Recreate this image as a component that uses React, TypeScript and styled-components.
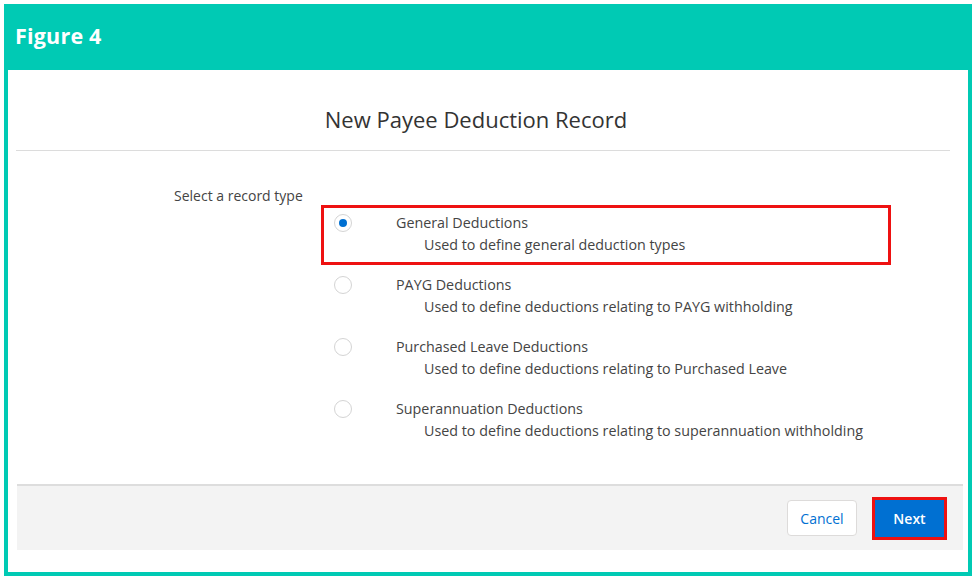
import styled, { createGlobalStyle } from "styled-components";

type Option = {
  id: string;
  title: string;
  description: string;
};

const options: Option[] = [
  {
    id: "general",
    title: "General Deductions",
    description: "Used to define general deduction types",
  },
  {
    id: "payg",
    title: "PAYG Deductions",
    description: "Used to define deductions relating to PAYG withholding",
  },
  {
    id: "leave",
    title: "Purchased Leave Deductions",
    description: "Used to define deductions relating to Purchased Leave",
  },
  {
    id: "super",
    title: "Superannuation Deductions",
    description: "Used to define deductions relating to superannuation withholding",
  },
];

function App() {
  const selected = "general";

  return (
    <>
      <GlobalStyle />
      <ScFrame>
        <ScHeader>Figure 4</ScHeader>
        <ScBody>
          <ScTitle>New Payee Deduction Record</ScTitle>
          <ScDivider />
          <ScContent>
            <ScFieldLabel>Select a record type</ScFieldLabel>
            <ScOptions>
              {options.map((item) => {
                const isChecked = item.id === selected;
                return (
                  <ScOptionRow key={item.id} $highlight={isChecked}>
                    <ScRadio $checked={isChecked} />
                    <ScOptionText>
                      <ScOptionTitle>{item.title}</ScOptionTitle>
                      <ScOptionDesc>{item.description}</ScOptionDesc>
                    </ScOptionText>
                  </ScOptionRow>
                );
              })}
            </ScOptions>
          </ScContent>
          <ScFooter>
            <ScCancelBtn>Cancel</ScCancelBtn>
            <ScNextOutline>
              <ScNextBtn>Next</ScNextBtn>
            </ScNextOutline>
          </ScFooter>
        </ScBody>
      </ScFrame>
    </>
  );
}

const GlobalStyle = createGlobalStyle`
  body {
    margin: 0;
    background: #ffffff;
    font-family: "Open Sans", "Noto Sans", sans-serif;
  }
`;

const ScFrame = styled.div`
  margin: 4px;
  width: 968px;
  height: 572px;
  box-sizing: border-box;
  background-color: #00cab4;
  padding: 0 4px 4px;
  display: flex;
  flex-direction: column;
`;

const ScHeader = styled.div`
  height: 66px;
  box-sizing: border-box;
  display: flex;
  align-items: center;
  padding-left: 7px;
  padding-bottom: 4px;
  color: #ffffff;
  font-family: "Open Sans", sans-serif;
  font-weight: 700;
  font-size: 21.5px;
  letter-spacing: 0.2px;
`;

const ScBody = styled.div`
  flex: 1;
  background-color: #ffffff;
  display: flex;
  flex-direction: column;
`;

const ScTitle = styled.h2`
  margin: 0;
  padding: 34px 24px 0 0;
  margin-bottom: 16px;
  line-height: 30px;
  font-size: 22px;
  font-weight: 400;
  color: #333333;
  text-align: center;
`;

const ScDivider = styled.div`
  height: 1px;
  background-color: #dcdcdc;
  margin: 0 18px 0 8px;
`;

const ScContent = styled.div`
  display: flex;
  padding-left: 166px;
  margin-bottom: 33px;
`;

const ScFieldLabel = styled.div`
  width: 147px;
  padding-top: 35px;
  line-height: 20px;
  font-size: 14px;
  color: #444444;
`;

const ScOptions = styled.div`
  display: flex;
  flex-direction: column;
  gap: 2px;
  padding-top: 54px;
`;

const ScOptionRow = styled.div<{ $highlight: boolean }>`
  width: 570px;
  height: 60px;
  box-sizing: border-box;
  border: 3px solid ${(p) => (p.$highlight ? "#ee1111" : "transparent")};
  display: flex;
  align-items: flex-start;
  padding-left: 10px;
`;

const ScRadio = styled.span<{ $checked: boolean }>`
  margin-top: 6px;
  width: 18px;
  height: 18px;
  box-sizing: border-box;
  border-radius: 50%;
  border: 1px solid #d4d4d4;
  background-color: #ffffff;
  display: flex;
  align-items: center;
  justify-content: center;
  flex-shrink: 0;

  &::after {
    content: "";
    width: 8px;
    height: 8px;
    border-radius: 50%;
    background-color: ${(p) => (p.$checked ? "#0070d2" : "transparent")};
  }
`;

const ScOptionText = styled.div`
  margin-left: 44px;
  padding-top: 4px;
  font-size: 14.3px;
  line-height: 22px;
  color: #444444;
`;

const ScOptionTitle = styled.div``;

const ScOptionDesc = styled.div`
  padding-left: 28px;
`;

const ScFooter = styled.div`
  margin: 0 5px 0 9px;
  height: 66px;
  box-sizing: border-box;
  background-color: #f3f3f3;
  border-top: 2px solid #dddddd;
  display: flex;
  align-items: center;
  justify-content: flex-end;
  gap: 15px;
  padding-right: 16px;
`;

const ScCancelBtn = styled.button`
  width: 70px;
  height: 36px;
  border: 1px solid #dddbda;
  border-radius: 4px;
  background-color: #ffffff;
  color: #0070d2;
  font-family: "Open Sans", sans-serif;
  font-size: 14px;
  cursor: pointer;
`;

const ScNextOutline = styled.div`
  border: 3px solid #ee1111;
  display: flex;
`;

const ScNextBtn = styled.button`
  width: 69px;
  height: 37px;
  border: none;
  background-color: #0070d2;
  color: #ffffff;
  font-family: "Open Sans", sans-serif;
  font-size: 14px;
  font-weight: 600;
  cursor: pointer;
`;

export default App;
